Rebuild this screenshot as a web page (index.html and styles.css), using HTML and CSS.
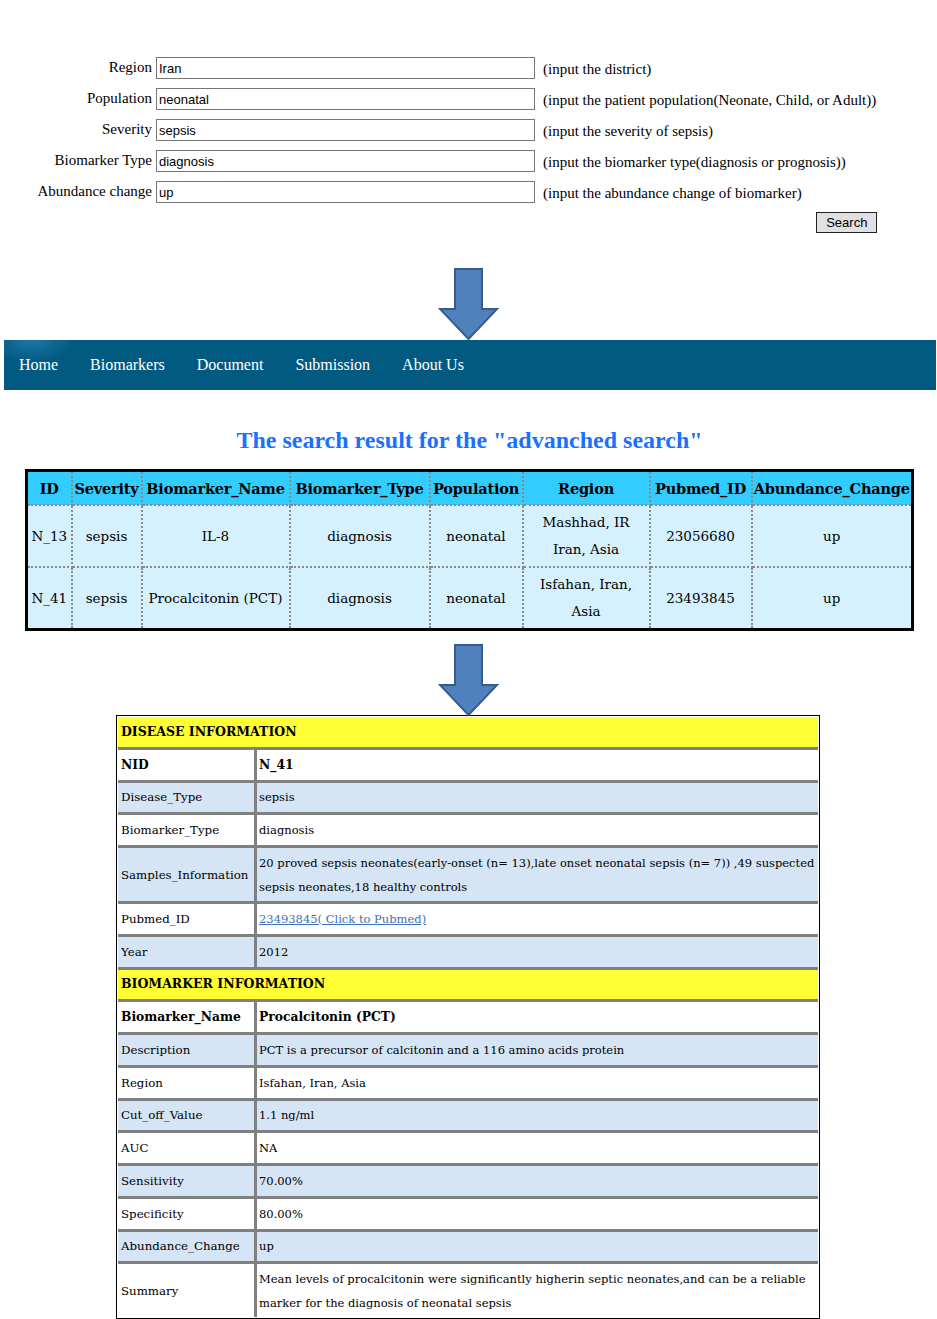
FILE: index.html
```html
<!DOCTYPE html>
<html>
<head>
<meta charset="utf-8">
<link rel="stylesheet" href="styles.css">
</head>
<body>
<form class="search-form">
  <label class="lbl">Region</label><input class="inp" type="text" value="Iran"><span class="hint">(input the district)</span>
  <label class="lbl">Population</label><input class="inp" type="text" value="neonatal"><span class="hint">(input the patient population(Neonate, Child, or Adult))</span>
  <label class="lbl">Severity</label><input class="inp" type="text" value="sepsis"><span class="hint">(input the severity of sepsis)</span>
  <label class="lbl">Biomarker Type</label><input class="inp" type="text" value="diagnosis"><span class="hint">(input the biomarker type(diagnosis or prognosis))</span>
  <label class="lbl">Abundance change</label><input class="inp" type="text" value="up"><span class="hint">(input the abundance change of biomarker)</span>
  <button class="btn" type="button">Search</button>
</form>

<div class="arrow arrow-top">
  <svg width="62" height="75" viewBox="0 0 62 75"><polygon points="17,2 44,2 44,42 59,42 30.5,72 2,42 17,42" fill="#4f81bd" stroke="#385d8a" stroke-width="2"/></svg>
</div>

<nav class="nav">
  <a class="nav-item active">Home</a>
  <a class="nav-item">Biomarkers</a>
  <a class="nav-item">Document</a>
  <a class="nav-item">Submission</a>
  <a class="nav-item">About Us</a>
</nav>

<h1 class="title">The search result for the "advanched search"</h1>

<table class="results">
  <colgroup>
    <col style="width:45px"><col style="width:70px"><col style="width:148px"><col style="width:140px"><col style="width:93px"><col style="width:127px"><col style="width:102px"><col style="width:161px">
  </colgroup>
  <thead>
    <tr><th>ID</th><th>Severity</th><th>Biomarker_Name</th><th>Biomarker_Type</th><th>Population</th><th>Region</th><th>Pubmed_ID</th><th>Abundance_Change</th></tr>
  </thead>
  <tbody>
    <tr><td>N_13</td><td>sepsis</td><td>IL-8</td><td>diagnosis</td><td>neonatal</td><td>Mashhad, IR Iran, Asia</td><td>23056680</td><td>up</td></tr>
    <tr><td>N_41</td><td>sepsis</td><td>Procalcitonin (PCT)</td><td>diagnosis</td><td>neonatal</td><td>Isfahan, Iran, Asia</td><td>23493845</td><td>up</td></tr>
  </tbody>
</table>

<div class="arrow arrow-bottom">
  <svg width="62" height="75" viewBox="0 0 62 75"><polygon points="17,2 44,2 44,42 59,42 30.5,72 2,42 17,42" fill="#4f81bd" stroke="#385d8a" stroke-width="2"/></svg>
</div>

<div class="detail-wrap">
<table class="detail">
  <tr class="section"><td colspan="2">DISEASE INFORMATION</td></tr>
  <tr class="w strong"><td class="k">NID</td><td class="v">N_41</td></tr>
  <tr class="b"><td class="k">Disease_Type</td><td class="v">sepsis</td></tr>
  <tr class="w"><td class="k">Biomarker_Type</td><td class="v">diagnosis</td></tr>
  <tr class="b tall"><td class="k">Samples_Information</td><td class="v">20 proved sepsis neonates(early-onset (n= 13),late onset neonatal sepsis (n= 7)) ,49 suspected sepsis neonates,18 healthy controls</td></tr>
  <tr class="w"><td class="k">Pubmed_ID</td><td class="v"><a class="link">23493845( Click to Pubmed)</a></td></tr>
  <tr class="b"><td class="k">Year</td><td class="v">2012</td></tr>
  <tr class="section"><td colspan="2">BIOMARKER INFORMATION</td></tr>
  <tr class="w strong"><td class="k">Biomarker_Name</td><td class="v">Procalcitonin (PCT)</td></tr>
  <tr class="b"><td class="k">Description</td><td class="v">PCT is a precursor of calcitonin and a 116 amino acids protein</td></tr>
  <tr class="w"><td class="k">Region</td><td class="v">Isfahan, Iran, Asia</td></tr>
  <tr class="b"><td class="k">Cut_off_Value</td><td class="v">1.1 ng/ml</td></tr>
  <tr class="w"><td class="k">AUC</td><td class="v">NA</td></tr>
  <tr class="b"><td class="k">Sensitivity</td><td class="v">70.00%</td></tr>
  <tr class="w"><td class="k">Specificity</td><td class="v">80.00%</td></tr>
  <tr class="b"><td class="k">Abundance_Change</td><td class="v">up</td></tr>
  <tr class="w tall"><td class="k">Summary</td><td class="v">Mean levels of procalcitonin were significantly higherin septic neonates,and can be a reliable marker for the diagnosis of neonatal sepsis</td></tr>
</table>
</div>
</body>
</html>
```

FILE: styles.css
```css
html, body {
  margin: 0;
  padding: 0;
  background: #ffffff;
}
body {
  font-family: "Liberation Serif", "Times New Roman", serif;
  color: #000;
  width: 937px;
}

/* search form */
.search-form {
  display: grid;
  grid-template-columns: 152px 379px auto;
  grid-auto-rows: 22px;
  column-gap: 0;
  row-gap: 9px;
  padding-top: 57px;
  width: max-content;
  font-size: 15px;
}
.lbl {
  text-align: right;
  line-height: 21px;
  padding-right: 4px;
  grid-column: 1;
  width: 152px;
  box-sizing: border-box;
  transform: translateX(4px);
}
.inp {
  grid-column: 2;
  margin-left: 4px;
  width: 379px;
  height: 22px;
  box-sizing: border-box;
  border: 1px solid #767676;
  padding: 0 2px;
  font-family: "Liberation Sans", Arial, sans-serif;
  font-size: 13px;
  color: #000;
  outline: none;
}
.hint {
  grid-column: 3;
  padding-left: 12px;
  padding-right: 1px;
  line-height: 24px;
}
.btn {
  grid-column: 3;
  justify-self: end;
  width: 61px;
  height: 21px;
  font-family: "Liberation Sans", Arial, sans-serif;
  font-size: 13px;
  background: #e1e1e1;
  border: 1px solid #222;
  padding: 0;
  color: #000;
}

/* arrows */
.arrow {
  display: flex;
  justify-content: center;
  padding-left: 1px;
}
.arrow svg { display: block; }
.arrow-top { margin-top: 33px; height: 73px; }
.arrow-bottom { margin-top: 12px; height: 72px; }

/* nav */
.nav {
  display: flex;
  align-items: center;
  margin: 0 1px 0 4px;
  height: 50px;
  background: #035a80;
}
.nav-item {
  color: #fff;
  font-size: 16px;
  padding: 0 16px;
  height: 50px;
  line-height: 50px;
}
.nav-item.active {
  padding-left: 15px;
  background: radial-gradient(ellipse 60% 45% at 40% 0%, rgba(40,130,180,0.7), rgba(3,90,128,0) 100%);
}

/* title */
.title {
  margin: 36px 0 15px;
  text-align: center;
  font-size: 24px;
  line-height: 28px;
  font-weight: bold;
  color: #1a70ff;
  padding-left: 2px;
}

/* results */
.results {
  width: 886px;
  margin: 0 0 0 25px;
  border-collapse: collapse;
  table-layout: fixed;
  border: 3px solid #000;
  font-family: "DejaVu Serif", Georgia, serif;
  font-size: 13.5px;
  background: #d5f1fd;
}
.results th {
  background: #33ccff;
  height: 32px;
  font-weight: bold;
  font-size: 14.5px;
  padding: 0;
  border: 2px dotted #8a8a8a;
  border-top: none;
  white-space: nowrap;
  letter-spacing: -0.2px;
}
.results td {
  height: 60px;
  padding: 0 4px;
  text-align: center;
  line-height: 27px;
  border: 2px dotted #8a8a8a;
}
.results tr:last-child td { border-bottom: none; }
.results th:first-child, .results td:first-child { border-left: none; padding: 0; }
.results th:last-child, .results td:last-child { border-right: none; }

/* detail */
.detail-wrap {
  width: 700px;
  margin: 0 0 0 116px;
  border: 1px solid #000;
  padding: 1px 1px 1px;
  box-sizing: content-box;
}
.detail {
  width: 100%;
  border-collapse: collapse;
  font-family: "DejaVu Serif", Georgia, serif;
  font-size: 11.8px;
}
.detail td {
  height: 29.75px;
  padding: 0 2px;
  border-top: 3px solid #808080;
  vertical-align: middle;
  line-height: 24px;
}
.detail tr:first-child td { border-top: none; }
.detail td.k {
  width: 131px;
  padding-left: 3px;
  border-right: 3px solid #808080;
}
.detail td.v { font-size: 11.5px; }
.detail tr.tall td { height: 53px; }
.detail tr.section td {
  background: #ffff33;
  font-weight: bold;
  font-size: 12.5px;
  padding-left: 3px;
}
.detail tr.w td { background: #ffffff; }
.detail tr.b td { background: #d5e5f5; }
.detail tr.strong td { font-weight: bold; font-size: 12.3px; }
.link {
  color: #3a73b8;
  text-decoration: underline;
}
```
